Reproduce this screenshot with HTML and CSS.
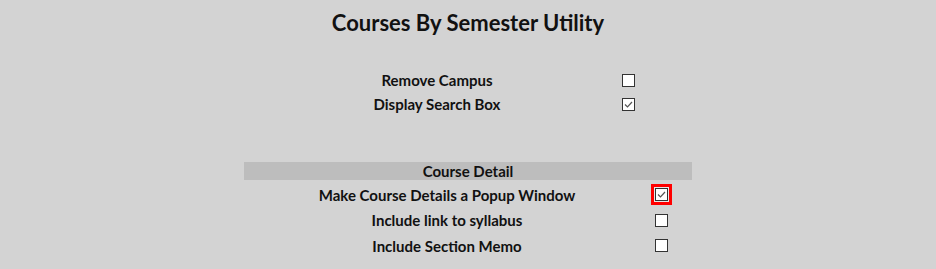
FILE: index.html
```html
<!DOCTYPE html>
<html lang="en">
<head>
    <meta charset="UTF-8">
    <title>Courses By Semester Utility</title>
    <link rel="stylesheet" href="styles.css">
</head>
<body>
    <h1 class="page-title">Courses By Semester Utility</h1>

    <div class="options general">
        <div class="label">Remove Campus</div>
        <div class="cell"><span class="box"></span></div>
        <div class="label">Display Search Box</div>
        <div class="cell">
            <span class="box">
                <svg viewBox="0 0 13 13" width="13" height="13"><path d="M3 6.5 L5.5 9 L10 4" fill="none" stroke="#555" stroke-width="1.2"/></svg>
            </span>
        </div>
    </div>

    <div class="options detail">
        <div class="section-head">Course Detail</div>
        <div class="label">Make Course Details a Popup Window</div>
        <div class="cell">
            <span class="box focused">
                <svg viewBox="0 0 13 13" width="13" height="13"><path d="M3 6.5 L5.5 9 L10 4" fill="none" stroke="#555" stroke-width="1.2"/></svg>
            </span>
        </div>
        <div class="label">Include link to syllabus</div>
        <div class="cell"><span class="box"></span></div>
        <div class="label">Include Section Memo</div>
        <div class="cell"><span class="box"></span></div>
    </div>
</body>
</html>
```

FILE: styles.css
```css
body {
    margin: 0;
    background-color: #d3d3d3;
    font-family: Lato, "Open Sans", sans-serif;
    font-weight: bold;
    color: #111;
}

.page-title {
    margin: 0;
    padding-top: 9px;
    height: 45px;
    font-size: 22px;
    text-align: center;
}

.options {
    display: grid;
    margin: 0 auto;
    align-items: center;
}

.general {
    width: 382px;
    margin-top: 14px;
    grid-template-columns: 320px 62px;
    grid-auto-rows: 24px;
}

.detail {
    width: 448px;
    margin-top: 46px;
    grid-template-columns: 406px 42px;
    grid-template-rows: 20px;
    grid-auto-rows: 25.5px;
}

.section-head {
    grid-column: 1 / 3;
    align-self: start;
    height: 18px;
    background-color: #bdbdbd;
    text-align: center;
    font-size: 15px;
    line-height: 18px;
}

.label {
    text-align: center;
    font-size: 15px;
}

.cell {
    display: flex;
    justify-content: center;
}

.detail .cell {
    justify-content: flex-start;
    padding-left: 5px;
}

.box {
    display: block;
    width: 13px;
    height: 13px;
    box-sizing: border-box;
    border: 1px solid #333;
    background-color: #fff;
    position: relative;
}

.box svg {
    position: absolute;
    left: -1px;
    top: -1px;
}

.box.focused {
    box-shadow: 0 0 0 1px #e8e8e8;
    outline: 3px solid #f00;
    outline-offset: 1px;
}
```
